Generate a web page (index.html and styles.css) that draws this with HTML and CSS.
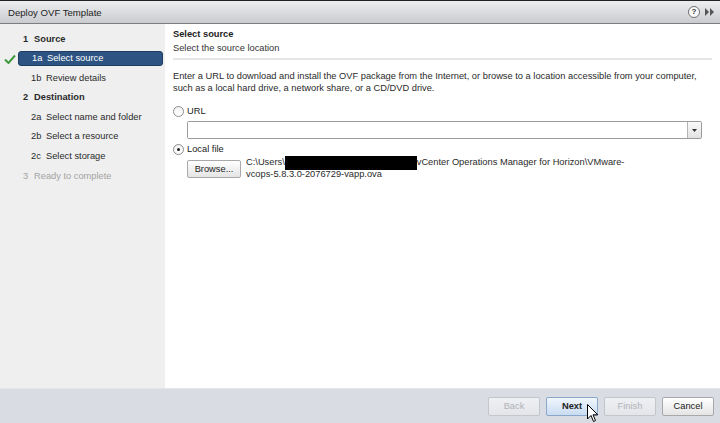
FILE: index.html
```html
<!DOCTYPE html>
<html>
<head>
<meta charset="utf-8">
<link rel="stylesheet" href="styles.css">
</head>
<body>
<div class="dialog">
  <div class="titlebar">
    <span class="title">Deploy OVF Template</span>
    <div class="title-icons">
      <span class="help">?</span>
      <svg class="more" width="9" height="8" viewBox="0 0 9 8"><path d="M0 0 L4 4 L0 8 Z M5 0 L9 4 L5 8 Z" fill="#555"/></svg>
    </div>
  </div>
  <div class="main">
    <div class="sidebar">
      <div class="step head"><span class="num">1</span>Source</div>
      <div class="step sub active">
        <svg class="check" width="12" height="10" viewBox="0 0 12 10"><path d="M1 5.5 L4.5 9 L11 1.5" fill="none" stroke="#3f9a3f" stroke-width="2"/></svg>
        <span class="snum">1a</span>Select source</div>
      <div class="step sub"><span class="snum">1b</span>Review details</div>
      <div class="step head"><span class="num">2</span>Destination</div>
      <div class="step sub"><span class="snum">2a</span>Select name and folder</div>
      <div class="step sub"><span class="snum">2b</span>Select a resource</div>
      <div class="step sub"><span class="snum">2c</span>Select storage</div>
      <div class="step disabled"><span class="num">3</span>Ready to complete</div>
    </div>
    <div class="content">
      <div class="header">
        <div class="h-title">Select source</div>
        <div class="h-sub">Select the source location</div>
      </div>
      <p class="desc">Enter a URL to download and install the OVF package from the Internet, or browse to a location accessible from your computer, such as a local hard drive, a network share, or a CD/DVD drive.</p>
      <div class="radio-row"><span class="radio"></span>URL</div>
      <div class="combo">
        <div class="combo-field"></div>
        <div class="combo-btn"><svg width="5" height="3" viewBox="0 0 5 3"><path d="M0 0 H5 L2.5 3 Z" fill="#333"/></svg></div>
      </div>
      <div class="radio-row local"><span class="radio checked"></span>Local file</div>
      <div class="file-row">
        <button class="btn browse">Browse...</button>
        <div class="path">C:\Users\<span class="redact"></span>vCenter Operations Manager for Horizon\VMware-<br>vcops-5.8.3.0-2076729-vapp.ova</div>
      </div>
    </div>
  </div>
  <div class="footer">
    <button class="btn disabled">Back</button>
    <button class="btn hover">Next</button>
    <button class="btn disabled">Finish</button>
    <button class="btn">Cancel</button>
    <svg class="cursor" width="12" height="19" viewBox="0 0 12 19"><path d="M0.5 0.5 L0.5 15 L4 11.5 L6.5 17.5 L8.5 16.5 L6 10.8 L10.8 10.8 Z" fill="#fff" stroke="#000" stroke-width="1"/></svg>
  </div>
</div>
</body>
</html>
```
FILE: styles.css
```css
* { box-sizing: border-box; }
html, body { margin: 0; padding: 0; }
body {
  width: 720px;
  height: 423px;
  overflow: hidden;
  font-family: "Liberation Sans", Arial, sans-serif;
  font-size: 9.3px;
  color: #222;
  background: #fff;
}
.dialog {
  width: 720px;
  height: 423px;
  display: flex;
  flex-direction: column;
}
.titlebar {
  height: 24px;
  flex: none;
  border-top: 1px solid #222;
  border-bottom: 1px solid #7b7d80;
  background: linear-gradient(#eceef0, #c9cbce);
  display: flex;
  align-items: center;
  justify-content: space-between;
  padding: 0 6px 0 8px;
}
.title { font-size: 9.6px; color: #1e1e1e; }
.title-icons { display: flex; align-items: center; gap: 5px; }
.help {
  width: 12px; height: 12px;
  border-radius: 50%;
  border: 1px solid #6f6f6f;
  background: #fafafa;
  font-size: 8px;
  font-weight: bold;
  color: #333;
  display: flex; align-items: center; justify-content: center;
  line-height: 1;
}
.main {
  flex: 1;
  display: flex;
  min-height: 0;
}
.sidebar {
  width: 165px;
  flex: none;
  background: #efefef;
  padding-top: 7px;
  padding-right: 2px;
}
.step {
  height: 15px;
  margin-bottom: 4.6px;
  display: flex;
  align-items: center;
  padding-left: 23px;
  position: relative;
  color: #2a2a2a;
}
.step.head { font-weight: bold; }
.step .num { width: 11px; }
.step.sub { padding-left: 31px; margin-left: 0; }
.step .snum { width: 15px; }
.step.active {
  background: #2c5381;
  color: #fff;
  margin-left: 18px;
  padding-left: 13px;
  border-radius: 3px;
  border: 1px solid #1f3d63;
}
.check { position: absolute; left: -15px; top: 2px; }
.step.disabled { color: #a3a3a3; }
.content {
  flex: 1;
  padding: 3px 8px 0 8px;
}
.header {
  border-bottom: 2px solid #e6e6e6;
  padding-bottom: 3px;
}
.h-title { font-weight: bold; height: 14px; line-height: 14px; }
.h-sub { height: 14px; line-height: 14px; color: #333; }
.desc {
  margin: 10px 0 0 0;
  line-height: 12px;
  color: #2a2a2a;
}
.radio-row {
  margin-top: 10px;
  display: flex;
  align-items: center;
  height: 14px;
  gap: 3px;
}
.radio-row.local { margin-top: 3px; }
.radio {
  width: 11px; height: 11px;
  border-radius: 50%;
  border: 1px solid #8c8c8c;
  background: linear-gradient(#f2f2f2, #ffffff);
  position: relative;
}
.radio.checked::after {
  content: "";
  position: absolute;
  left: 3px; top: 3px;
  width: 3px; height: 3px;
  border-radius: 50%;
  background: #222;
}
.combo {
  margin: 3px 10px 0 14px;
  height: 18px;
  display: flex;
  border: 1px solid #9a9a9a;
  border-radius: 2px;
}
.combo-field { flex: 1; background: #fff; }
.combo-btn {
  width: 14px;
  border-left: 1px solid #b5b5b5;
  background: linear-gradient(#fafafa, #e2e2e2);
  display: flex;
  align-items: center;
  justify-content: center;
}
.file-row {
  display: flex;
  margin: 0 0 0 14px;
  gap: 5px;
}
.btn {
  font-family: "Liberation Sans", Arial, sans-serif;
  font-size: 9.3px;
  color: #222;
  height: 19px;
  border: 1px solid #a9a9a9;
  border-radius: 2px;
  background: linear-gradient(#ffffff, #e4e4e4);
  padding: 0;
}
.browse { width: 54px; margin-top: 4px; height: 18px; }
.path { line-height: 12px; color: #2a2a2a; }
.redact {
  display: inline-block;
  width: 132px;
  height: 14px;
  background: #000;
  vertical-align: middle;
  margin: -3px 0 -3px 0;
}
.footer {
  height: 35px;
  flex: none;
  background: #d9dce3;
  border-top: 1px solid #e4e6ea;
  display: flex;
  align-items: center;
  justify-content: flex-end;
  gap: 6px;
  padding-right: 6px;
  position: relative;
}
.footer .btn { width: 52px; }
.btn.disabled {
  color: #b0b3b8;
  border-color: #c3c6cb;
  background: linear-gradient(#eef0f3, #e3e5e9);
}
.btn.hover {
  font-weight: bold;
  border-color: #8aa6c8;
  background: linear-gradient(#f0f6fd, #c9dcf2);
}
.cursor { position: absolute; left: 587px; top: 15px; }
```
